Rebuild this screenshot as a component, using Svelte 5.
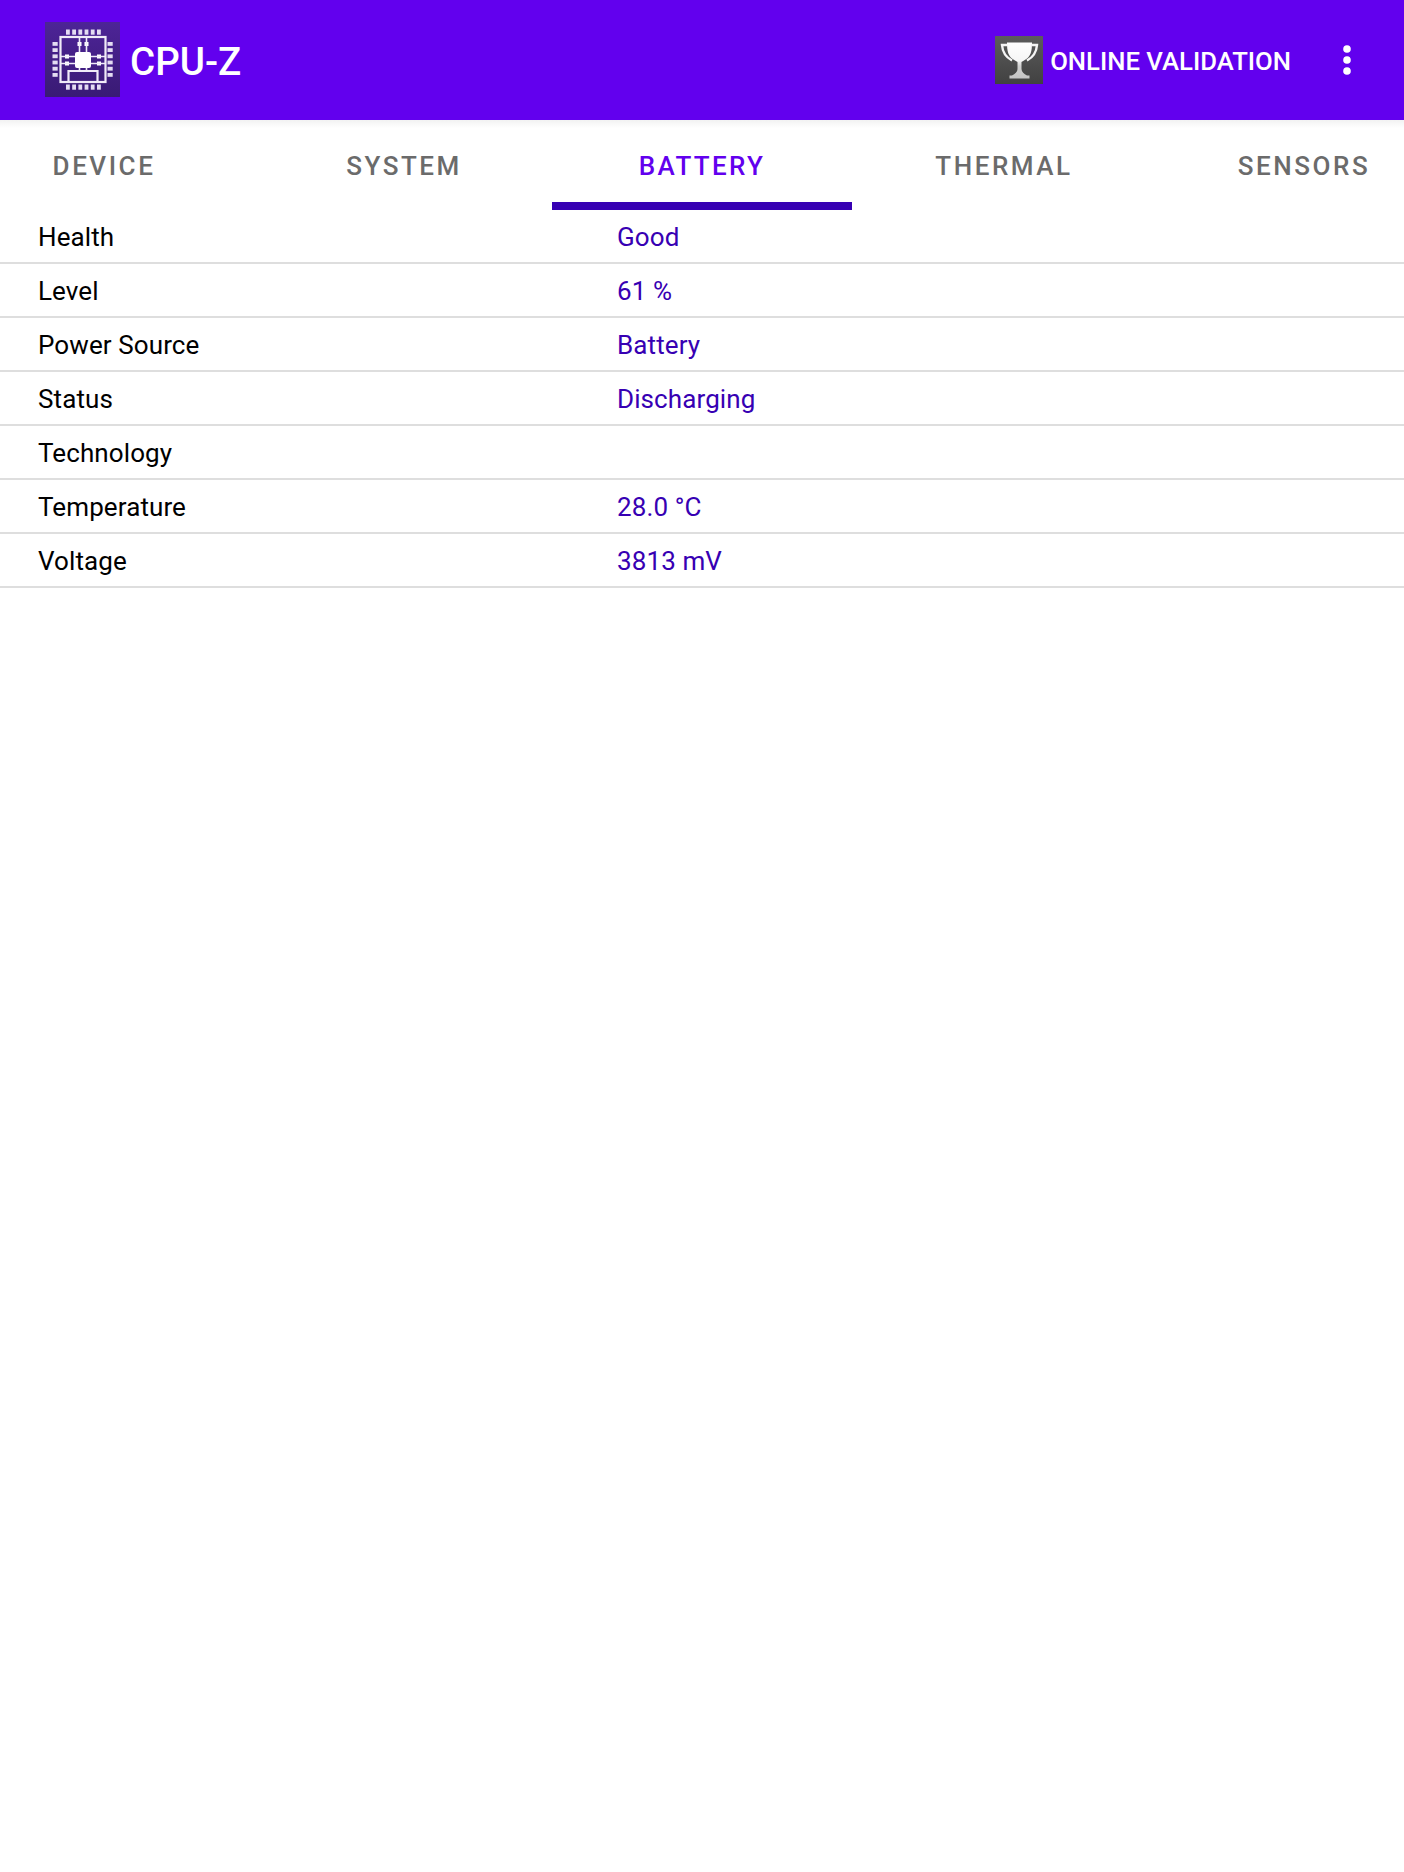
<script lang="ts">
  const tabs = ['DEVICE', 'SYSTEM', 'BATTERY', 'THERMAL', 'SENSORS'];
  const active = 'BATTERY';

  const rows = [
    { label: 'Health', value: 'Good' },
    { label: 'Level', value: '61 %' },
    { label: 'Power Source', value: 'Battery' },
    { label: 'Status', value: 'Discharging' },
    { label: 'Technology', value: '' },
    { label: 'Temperature', value: '28.0 °C' },
    { label: 'Voltage', value: '3813 mV' },
  ];

  // pin offsets along the chip edges
  const pins = [0, 1, 2, 3, 4, 5];
</script>

<div class="page">
  <header class="bar">
    <svg class="logo" viewBox="0 0 75 75" aria-hidden="true">
      <defs>
        <linearGradient id="logoBg" x1="0" y1="0" x2="0" y2="1">
          <stop offset="0" stop-color="#4d2497" />
          <stop offset="1" stop-color="#391a74" />
        </linearGradient>
        <filter id="soft" x="-5%" y="-5%" width="110%" height="110%">
          <feGaussianBlur stdDeviation="0.55" />
        </filter>
      </defs>
      <rect width="75" height="75" fill="url(#logoBg)" />
      <g filter="url(#soft)">
        <g fill="#e4dcf2">
          {#each pins as p}
            <rect x={21 + p * 6.2} y="7.5" width="3.8" height="5.200" />
            <rect x={21 + p * 6.2} y="62.5" width="3.8" height="5.200" />
            <rect x="7.5" y={20 + p * 6.2} width="5.200" height="3.8" />
            <rect x="62.5" y={20 + p * 6.2} width="5.200" height="3.8" />
          {/each}
        </g>
        <rect x="30" y="30" width="16" height="16" rx="2" fill="#fff" />
        <g fill="#fff">
          <rect x="32.500" y="20" width="4" height="4" />
          <rect x="39.500" y="20" width="4" height="4" />
          <rect x="20" y="32.500" width="4" height="4" />
          <rect x="20" y="39.500" width="4" height="4" />
          <rect x="52" y="32.500" width="4" height="4" />
          <rect x="52" y="39.500" width="4" height="4" />
        </g>
        <g fill="none" stroke="#f0ebf8" stroke-width="2.200">
          <rect x="15.500" y="15" width="45" height="45" />
          <path d="M23.500 60V49H52.500V60" />
          <path d="M34.500 16V30M41.500 16V30M16 34.500H30M16 41.500H30M46 34.500H60M46 41.500H60M34.500 46V49M41.500 46V49" stroke-width="1.600" />
        </g>
      </g>
    </svg>
    <span class="title">CPU-Z</span>
    <span class="spacer"></span>
    <svg class="trophy" viewBox="0 0 48 48" aria-hidden="true">
      <defs>
        <linearGradient id="cupBg" x1="0" y1="0" x2="0" y2="1">
          <stop offset="0" stop-color="#5c5c5c" />
          <stop offset="1" stop-color="#414141" />
        </linearGradient>
        <linearGradient id="cupFill" x1="0" y1="0" x2="0" y2="1">
          <stop offset="0" stop-color="#ffffff" />
          <stop offset="0.5" stop-color="#f6f6f6" />
          <stop offset="0.65" stop-color="#cfcfcf" />
          <stop offset="1" stop-color="#c4c4c4" />
        </linearGradient>
        <filter id="softCup" x="-5%" y="-5%" width="110%" height="110%">
          <feGaussianBlur stdDeviation="0.3" />
        </filter>
      </defs>
      <rect width="48" height="48" fill="url(#cupBg)" />
      <g filter="url(#softCup)">
        <path d="M12 6.500H37C37 15 36 21 29 24.500L26.500 26V33C26.500 36 29 38 32 39.500H34.500V42.500H14.500V39.500H17C20 38 22.500 36 22.500 33V26L20 24.500C13 21 12 15 12 6.500Z" fill="url(#cupFill)" />
        <path d="M12 9H7C7.500 16 10.500 21 17 24.500M37 9H42C41.500 16 38.500 21 32 24.500" fill="none" stroke="#f5f5f5" stroke-width="2.400" />
      </g>
    </svg>
    <span class="validate">ONLINE VALIDATION</span>
    <svg class="more" viewBox="0 0 8 30" aria-hidden="true">
      <circle cx="4" cy="4" r="3.800" fill="#fff" />
      <circle cx="4" cy="15" r="3.800" fill="#fff" />
      <circle cx="4" cy="26" r="3.800" fill="#fff" />
    </svg>
  </header>

  <nav class="tabs">
    {#each tabs as tab}
      <div class="tab" class:on={tab === active}>{tab}</div>
    {/each}
  </nav>

  <div class="list">
    {#each rows as row}
      <div class="row">
        <span class="label">{row.label}</span>
        <span class="value">{row.value}</span>
      </div>
    {/each}
  </div>
</div>

<style>
  :global(body) { margin: 0; background: #fff; }
  .page { min-height: 1872px; background: #fff; font-family: Roboto, "Liberation Sans", sans-serif; }

  .bar { height: 120px; background: #6200ee; display: flex; align-items: center; padding: 0 53px 0 45px; box-sizing: border-box; }
  .logo { width: 75px; height: 75px; flex: none; margin-top: -1px; }
  .title { margin: 2px 0 0 10px; font-size: 38.500px; font-weight: 500; color: #fff; }
  .spacer { flex: 1; }
  .trophy { width: 48px; height: 48px; flex: none; }
  .validate { margin: 2px 0 0 7px; font-size: 25.700px; font-weight: 500; color: #fff; }
  .more { width: 8px; height: 30px; flex: none; margin-left: 52px; }

  .tabs { height: 90px; display: flex; justify-content: center; overflow: hidden; position: relative; }
  .tabs::before { content: ''; position: absolute; left: 0; right: 0; top: 0; height: 8px; background: linear-gradient(#f2f2f2, #fff); }
  .tab { flex: none; width: 300px; height: 90px; box-sizing: border-box; padding: 30px 0 0 4px; text-align: center; font-size: 26px; line-height: 32px; font-weight: 500; letter-spacing: 2.550px; color: #6b6b6b; }
  .tab.on { padding-left: 0; letter-spacing: 2.300px; color: #6200ee; border-bottom: 8px solid #3700b3; }

  .row { height: 54px; box-sizing: border-box; border-bottom: 2px solid #dedede; display: flex; align-items: center; padding: 2px 0 0 38px; font-size: 26px; letter-spacing: 0.100px; }
  .label { width: 579px; flex: none; color: #000; }
  .value { color: #3700b3; }
</style>
